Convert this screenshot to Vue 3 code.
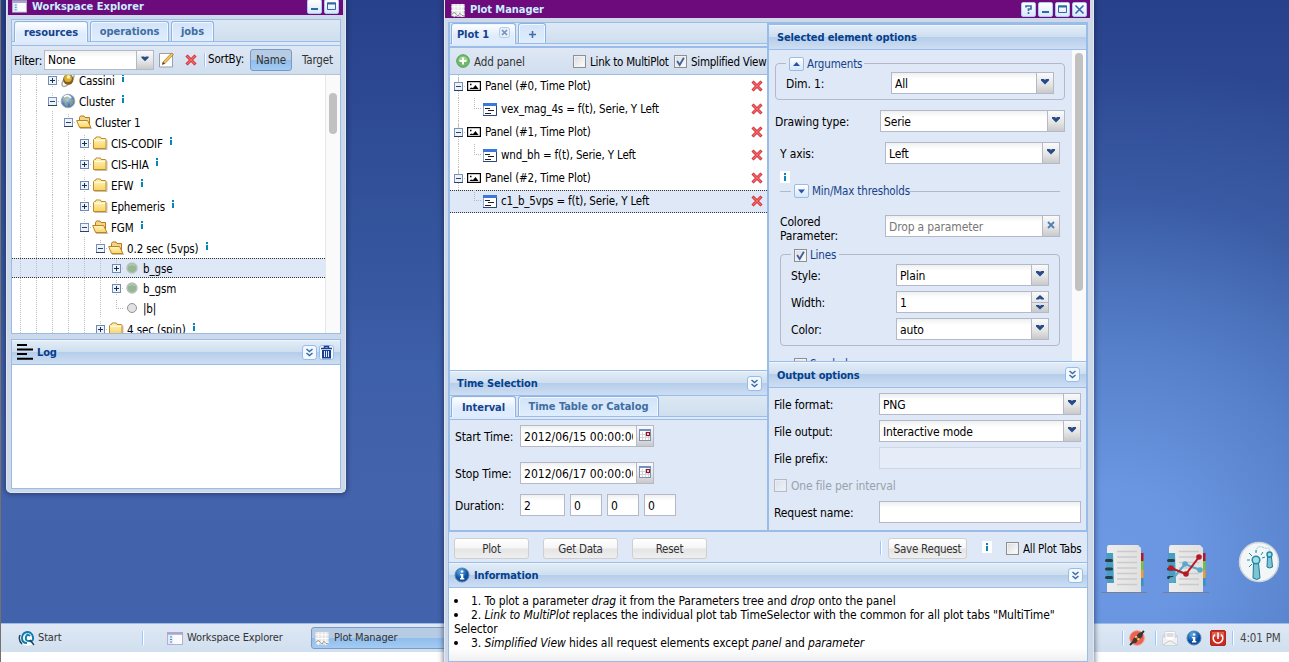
<script setup>
const tree = [
  { d: 2, t: 'Cassini', icon: 'cassini', e: 'plus', info: true },
  { d: 2, t: 'Cluster', icon: 'globe', e: 'minus', info: true },
  { d: 3, t: 'Cluster 1', icon: 'open', e: 'minus' },
  { d: 4, t: 'CIS-CODIF', icon: 'folder', e: 'plus', info: true },
  { d: 4, t: 'CIS-HIA', icon: 'folder', e: 'plus', info: true },
  { d: 4, t: 'EFW', icon: 'folder', e: 'plus', info: true },
  { d: 4, t: 'Ephemeris', icon: 'folder', e: 'plus', info: true },
  { d: 4, t: 'FGM', icon: 'open', e: 'minus', info: true },
  { d: 5, t: '0.2 sec (5vps)', icon: 'open', e: 'minus', info: true },
  { d: 6, t: 'b_gse', icon: 'ball', e: 'plus', leaf: true, sel: true },
  { d: 6, t: 'b_gsm', icon: 'ball', e: 'plus', leaf: true },
  { d: 6, t: '|b|', icon: 'dot', e: 'end', leaf: true },
  { d: 5, t: '4 sec (spin)', icon: 'folder', e: 'plus', info: true },
]
const plots = [
  { t: 'Panel (#0, Time Plot)' },
  { t: 'vex_mag_4s = f(t), Serie, Y Left', child: true },
  { t: 'Panel (#1, Time Plot)' },
  { t: 'wnd_bh = f(t), Serie, Y Left', child: true },
  { t: 'Panel (#2, Time Plot)' },
  { t: 'c1_b_5vps = f(t), Serie, Y Left', child: true, sel: true, last: true },
]
</script>

<template>
  <div class="desktop">
    <svg class="defs" width="0" height="0">
      <defs>
        <linearGradient id="gf" x1="0" y1="0" x2="0" y2="1"><stop offset="0" stop-color="#fff6c4" /><stop offset="1" stop-color="#f9d35f" /></linearGradient>
        <radialGradient id="gg" cx=".4" cy=".3"><stop offset="0" stop-color="#d5e4f2" /><stop offset="1" stop-color="#5279ad" /></radialGradient>
        <radialGradient id="gi" cx=".4" cy=".25"><stop offset="0" stop-color="#64b2ee" /><stop offset="1" stop-color="#0c4f9c" /></radialGradient>
        <linearGradient id="gp" x1="0" y1="0" x2="1" y2="0"><stop offset="0" stop-color="#ededed" /><stop offset="1" stop-color="#e0e0e0" /></linearGradient>
      </defs>
      <symbol id="folder" viewBox="0 0 16 16">
        <path d="M1.500 13.500v-9l1-1h1l.5-1.500h4.500l.5 1.500h4.500l.5.500v9.500z" fill="url(#gf)" stroke="#c08a2e" />
        <path d="M2.500 14.500h12.500V5" fill="none" stroke="#8b8266" stroke-opacity=".5" /><path d="M2.500 5.500h10.500" stroke="#fffbe0" />
      </symbol>
      <symbol id="open" viewBox="0 0 16 16">
        <path d="M3.500 12.500v-9l1-1.500h3.500l1 1.500h4.500v9z" fill="#f4d585" stroke="#b57a1c" />
        <path d="M.7 6.500h10.800l3.500 7H3.500z" fill="url(#gf)" stroke="#bd8426" /><path d="M4 14.500h12" stroke="#8b8266" stroke-opacity=".5" />
      </symbol>
      <symbol id="cassini" viewBox="0 0 16 16">
        <ellipse cx="8" cy="8" rx="8" ry="3.500" transform="rotate(-48 8 8)" fill="none" stroke="#aaa9a4" stroke-width="1.500" />
        <circle cx="8.300" cy="7.500" r="5.200" fill="#80601a" /><circle cx="8" cy="6.300" r="3.800" fill="#dcae39" /><circle cx="8.500" cy="5" r="1.800" fill="#fff0a0" />
      </symbol>
      <symbol id="globe" viewBox="0 0 16 16">
        <circle cx="8" cy="8" r="6.800" fill="url(#gg)" stroke="#98a2b0" stroke-width=".8" />
        <path d="M3 4l4-2 2 2-2 3-3 1zM10 7l4-1-1 5-3 2zM6 9l2 3-1 2-3-3z" fill="#94b884" opacity=".6" /><path d="M4 4q4-3 7 1" stroke="#fff" stroke-width="1.500" fill="none" />
      </symbol>
      <symbol id="ball" viewBox="0 0 16 16"><circle cx="8" cy="8" r="5" fill="#92b994" stroke="#bcbdbc" stroke-width="1.500" /><path d="M5 5.500q3-2 6 0" stroke="#bbd2bb" fill="none" /></symbol>
      <symbol id="dot" viewBox="0 0 16 16"><circle cx="8" cy="8" r="4.500" fill="#e2e2e2" stroke="#929292" /></symbol>
      <symbol id="plus" viewBox="0 0 16 16"><path d="M8.500 0v16M8 8.500h8" stroke="#c3c3c3" stroke-dasharray="1 1" /><rect x="4.500" y="4.500" width="8" height="8" fill="#eef3fb" stroke="#6f8bb3" /><path d="M6 8.500h5M8.500 6v5" stroke="#1d2f50" /></symbol>
      <symbol id="minus" viewBox="0 0 16 16"><path d="M8.500 0v5M8 8.500h8" stroke="#c3c3c3" stroke-dasharray="1 1" /><rect x="4.500" y="4.500" width="8" height="8" fill="#eef3fb" stroke="#7891b6" /><path d="M6 8.500h5M4 12.500h9" stroke="#2c4264" /></symbol>
      <symbol id="end" viewBox="0 0 16 16"><path d="M8.500 0v9M8 8.500h8" stroke="#b8b8b8" stroke-dasharray="1 1" /></symbol>
      <symbol id="del" viewBox="0 0 12 12"><path d="M1.500 1.500l9 9M10.500 1.500l-9 9" stroke="#cf2531" stroke-width="3" /><path d="M2 2l8 8M10 2l-8 8" stroke="#f46b6a" stroke-width="1.400" /></symbol>
      <symbol id="img" viewBox="0 0 14 10"><rect x=".6" y=".6" width="12.800" height="8.800" fill="#fff" stroke="#000" stroke-width="1.200" /><path d="M2.500 8l1.500-1.500 2 .5 2.500-3 3 4z" fill="#000" /><path d="M3 2.800h1.500v1.500H3z" /></symbol>
      <symbol id="par" viewBox="0 0 14 13"><rect x=".5" y=".5" width="13" height="12" fill="#fff" stroke="#8ca5d5" /><path d="M0 1.500h14" stroke="#3b78dc" stroke-width="3" /><path d="M13.500 3v9.500H0" fill="none" stroke="#2c4579" /><path d="M2 5.500h5M5 7.500h6M2 10.500h6" stroke="#202020" /></symbol>
      <symbol id="chart" viewBox="0 0 16 16"><path d="M1 1h14v14L1 14z" fill="#e4e4e4" /><path d="M4 1v14M8 1v14M12 1v14M1 4h14M1 8h14M1 12h14" stroke="#fff" /><path d="M1 13q3-5 5-1l2 2 2-3 2 2 3 1" fill="none" stroke="#8d8d8d" /></symbol>
      <symbol id="listwin" viewBox="0 0 16 13"><rect x=".5" y=".5" width="15" height="12" fill="#fbfbff" stroke="#b3b0cf" /><path d="M0 1.500h16" stroke="#aaa5cd" stroke-width="2.500" /><path d="M1 3h5v9H1z" fill="#e2eaf6" /><path d="M3 5h2M3 7.500h2M3 10h2" stroke="#3b93d4" /></symbol>
      <symbol id="chev" viewBox="0 0 15 15"><rect x=".5" y=".5" width="14" height="14" rx="2.500" fill="#f2f8fe" stroke="#96bce9" /><path d="M4.500 4l3 2.500 3-2.500M4.500 8l3 2.500 3-2.500" fill="none" stroke="#3c6ca8" stroke-width="1.500" /></symbol>
      <symbol id="inf" viewBox="0 0 16 16"><circle cx="8" cy="8" r="7" fill="url(#gi)" stroke="#5683b5" /><path d="M7 3.500h2.300v2H7zM6 7h3.300v4h1v1.500H6V11h1V8.200H6z" fill="#fff" /></symbol>
      <symbol id="cal" viewBox="0 0 14 14"><rect x=".5" y=".5" width="11" height="11" fill="#fff" stroke="#7b93b8" /><path d="M0 1h12" stroke="#6f91c4" stroke-width="2" /><path d="M3.500 3v8M6.500 3v8M9.500 3v8M1 5.500h10M1 8.500h10" stroke="#d5d5d5" /><rect x="7.500" y="3.500" width="3" height="3" fill="#fff" stroke="#8d1426" stroke-width="1.200" /></symbol>
      <symbol id="arr" viewBox="0 0 16 20"><path d="M4 6h3l1 1 1-1h3v1.500L8 11.500 4 7.500z" fill="#254b88" /></symbol>
      <symbol id="tick" viewBox="0 0 13 13"><path d="M2.500 6l3 4.500L10.500 2" fill="none" stroke="#41619d" stroke-width="2.200" /></symbol>
      <symbol id="t-min" viewBox="0 0 13 13"><path d="M3 9h7" stroke="#3465a8" stroke-width="2" /></symbol>
      <symbol id="t-max" viewBox="0 0 13 13"><path d="M2.500 3h8v6.500h-8z" fill="none" stroke="#3465a8" /><path d="M2 3.500h9" stroke="#3465a8" stroke-width="2" /></symbol>
      <symbol id="book" viewBox="0 0 46 50">
        <path d="M0 47.500h46" stroke="#777" stroke-width="1" opacity=".7" />
        <path d="M38 8h4.500v8H38z" fill="#b01a24" /><path d="M38 16h4.500v9H38z" fill="#78bf3c" /><path d="M38 25h4.500v8H38z" fill="#eb9c33" /><path d="M38 33h4.500v8H38z" fill="#3a91b9" />
        <path d="M8 0h29l3 3v44H6V3q0-3 2-3z" fill="url(#gp)" /><path d="M16 6.500h20M16 12h20M16 17.500h20M16 23h20M16 28.500h20M16 34h20M16 39.500h20" stroke="#cacaca" stroke-width="1.300" />
        <path d="M5 8h7l1 30H6z" fill="#4a9ec4" /><path d="M5.500 15.500h5M5.500 24h5M5.500 32.500h5" stroke="#263d47" stroke-width="3" stroke-linecap="round" />
      </symbol>
    </svg>

    <div class="icons">
      <svg width="46" height="50"><use href="#book" /></svg>
      <svg width="46" height="50"><use href="#book" /><path d="M8 36L22 19l15 6" fill="none" stroke="#5aa9cb" stroke-width="2" /><path d="M8 23l15 6 13-17" fill="none" stroke="#b51927" stroke-width="2" /><g fill="#5aa9cb"><circle cx="9" cy="35" r="3" /><circle cx="22" cy="19" r="2.800" /><circle cx="37" cy="25" r="2.800" /></g><g fill="#b51927"><circle cx="8" cy="23" r="2.800" /><circle cx="23" cy="29" r="2.800" /><circle cx="36" cy="12" r="2.800" /></g></svg>
      <svg class="round" width="42" height="42" viewBox="0 0 42 42"><circle cx="21" cy="21" r="19.500" fill="#f3f6f7" stroke="#cdd5dc" stroke-width="1.500" /><path d="M18 11q1-7 6-5t6 1 2 4" fill="none" stroke="#8cc8dc" stroke-dasharray="2 1" /><path d="M15.500 22h5l1.500 15q-3 3-7 0z" fill="#7fc4d4" stroke="#197a96" /><circle cx="18" cy="19" r="3.800" fill="#a6dbe6" stroke="#218ba8" stroke-width="1.500" /><path d="M29.500 16h4l1 10q-3 2-5.500 0z" fill="#7fc4d4" stroke="#197a96" /><circle cx="31.500" cy="13.500" r="2.500" fill="#a6dbe6" stroke="#218ba8" stroke-width="1.500" /><path d="M9 19h3M24 17l3-1M11 12l3 3M18 9v3M25 11l-2 3M11 26l3-3" stroke="#218ba8" /></svg>
    </div>

    <footer class="taskbar">
      <svg class="start-ic" width="18" height="16" viewBox="0 0 18 16"><path d="M10 1q6 0 6 6t-2 6l3 2-4 0q-7 2-10-3T5 2q3-2 5-1z" fill="#fff" /><path d="M9 13q-5 0-5-5t5-6q5 0 6 5t-4 4q-4 0-3-4t4-1" fill="none" stroke="#0c7fae" stroke-width="2" /><path d="M12 10l4 5M2 5q-2 5 2 9" stroke="#26415e" fill="none" stroke-width="1.500" /></svg>
      <span class="tb-start">Start</span><i class="sep s1"></i>
      <svg class="we" width="16" height="13"><use href="#listwin" /></svg><span class="tb-we">Workspace Explorer</span>
      <div class="task"><svg width="16" height="15"><use href="#chart" /></svg><span>Plot Manager</span></div>
      <div class="tray">
        <i class="sep"></i>
        <svg width="16" height="16" viewBox="0 0 16 16"><circle cx="8" cy="8" r="7.300" fill="#ee6050" stroke="#f59a88" /><path d="M3 13l1-4 2-2 3 3-2 3zM7 6l3-3 3-1 1 2-1 3-2 2z" fill="#3a3a3a" /><path d="M1 15l3-3M12 4l3-3" stroke="#333" stroke-width="1.800" /><path d="M6 7.500l2-1.500M8.500 10l2-1.500" stroke="#ffd75a" stroke-width="1.500" /></svg>
        <i class="sep b"></i>
        <svg class="mail" width="16" height="16" viewBox="0 0 16 16"><path d="M1 6l7-5 7 5v9H1z" fill="#d9dcdf" stroke="#c4c8cb" /><path d="M3 1.500h10v7.500l-5 3-5-3z" fill="#fff" stroke="#d6d6d6" /><path d="M4.500 4h7M4.500 6h7" stroke="#bbb" /><path d="M1 7l7 4 7-4v8H1z" fill="#f0f1f1" /><path d="M1 15l6-4h2l6 4" fill="none" stroke="#c8c8c8" /></svg>
        <svg class="ti" width="16" height="16"><use href="#inf" /></svg>
        <svg class="pw" width="16" height="16" viewBox="0 0 16 16"><rect x=".5" y=".5" width="15" height="15" rx="1.500" fill="#cf2a20" stroke="#a82a22" /><path d="M2 2h12v5H2z" fill="#e0604f" /><path d="M5 4.500a4.800 4.800 0 1 0 6 0" fill="none" stroke="#fff" stroke-width="1.600" /><path d="M8 2.500V9" stroke="#fff" stroke-width="1.600" /></svg>
        <i class="sep c"></i><span class="clock">4:01 PM</span>
      </div>
    </footer>

    <section class="win explorer">
      <header class="title"><svg width="15" height="13"><use href="#listwin" /></svg><b>Workspace Explorer</b><span class="tools"><i class="tool"><svg><use href="#t-min" /></svg></i><i class="tool"><svg><use href="#t-max" /></svg></i></span></header>
      <div class="ex-panel">
        <nav class="tabs"><span class="tab on t-res">resources</span><span class="tab t-op">operations</span><span class="tab t-job">jobs</span></nav>
        <div class="toolbar">
          <label>Filter:</label>
          <div class="combo"><span>None</span><i class="trig"><svg><use href="#arr" /></svg></i></div>
          <svg class="edit" width="15" height="16" viewBox="0 0 15 16"><path d="M.5 1.500h13v13.500H.5z" fill="#fff" stroke="#9a9ea5" /><path d="M3.500 12l.5-2L12.500 1l2 1.500-8.500 9z" fill="#eec35c" stroke="#a77a27" stroke-width=".7" /><path d="M3 13l1-3 2 1.500z" fill="#444" /></svg>
          <svg class="rm" width="12" height="12"><use href="#del" /></svg>
          <i class="sep"></i><span class="sortby">SortBy:</span><span class="pressed">Name</span><span class="target">Target</span>
        </div>
        <div class="tree">
          <div class="rows">
            <div v-for="r in tree" :key="r.t" class="row" :class="{ leaf: r.leaf, sel: r.sel }">
              <i v-for="n in r.d" :key="n" class="line"></i>
              <svg width="16" height="16"><use :href="'#' + r.e" /></svg>
              <svg width="16" height="16"><use :href="'#' + r.icon" /></svg>
              <span>{{ r.t }}</span><i v-if="r.info" class="info"></i>
            </div>
          </div>
          <div class="track"><i></i></div>
        </div>
      </div>
      <div class="log">
        <header class="phead"><svg width="16" height="16" viewBox="0 0 16 16"><path d="M0 1h10M0 5.500h16M0 10h10M0 14.800h16" stroke="#000" stroke-width="2" /></svg><b>Log</b><svg class="r" width="15" height="15"><use href="#chev" /></svg><svg class="trash" width="15" height="15" viewBox="0 0 15 15"><rect x=".5" y=".5" width="14" height="14" rx="2" fill="#f2f8fe" stroke="#96bce9" /><path d="M2 3.500h11M5.500 3V1.500h4V3" fill="none" stroke="#1c3f90" stroke-width="1.500" /><path d="M3 5h9v8.500H3z" fill="#1c3f90" /><path d="M5.500 6v6M7.500 6v6M9.500 6v6" stroke="#dceaff" /></svg></header>
      </div>
    </section>

    <section class="win plot">
      <header class="title"><svg width="16" height="15"><use href="#chart" /></svg><b>Plot Manager</b><span class="tools"><i class="tool"><svg viewBox="0 0 13 13"><path d="M4 4.500V3h5v3H6.500v2M6.500 9v2" fill="none" stroke="#3c6ca8" stroke-width="1.700" /></svg></i><i class="tool"><svg><use href="#t-min" /></svg></i><i class="tool"><svg><use href="#t-max" /></svg></i><i class="tool"><svg viewBox="0 0 13 13"><path d="M2.500 2.500l8 8M10.500 2.500l-8 8" fill="none" stroke="#3465a8" stroke-width="1.600" /></svg></i></span></header>
      <div class="pm">
        <div class="cols">
          <div class="left">
            <nav class="tabs"><span class="tab on t-p1">Plot 1<svg width="11" height="11" viewBox="0 0 11 11"><rect x=".5" y=".5" width="10" height="10" rx="2" fill="#e4effa" stroke="#b3cdeb" /><path d="M3 3l5 5M8 3l-5 5" stroke="#7190b8" stroke-width="1.600" /></svg></span><span class="tab t-plus"><svg width="9" height="9" viewBox="0 0 9 9"><path d="M4.500 1v7M1 4.500h7" stroke="#416da3" stroke-width="1.600" /></svg></span></nav>
            <div class="toolbar">
              <svg width="14" height="14" viewBox="0 0 14 14"><circle cx="7" cy="7" r="6.300" fill="#6dbb66" stroke="#5b9d5b" /><path d="M2.500 7a4.500 4.500 0 0 1 9 0" fill="#a3d795" /><path d="M7 3.500v7M3.500 7h7" stroke="#fff" stroke-width="2" /></svg>
              <span class="add">Add panel</span><i class="cb"></i><span class="l1">Link to MultiPlot</span><i class="cb"><svg><use href="#tick" /></svg></i><span class="l2">Simplified View</span>
            </div>
            <div class="plist">
              <div v-for="r in plots" :key="r.t" class="prow" :class="{ sel: r.sel }">
                <template v-if="r.child"><i class="line" :class="{ none: r.last }"></i><svg class="el" width="16" height="23" viewBox="0 0 16 23"><path d="M8.500 0v11M8 10.500h8" stroke="#b8b8b8" stroke-dasharray="1 1" /></svg><svg class="pi" width="14" height="13"><use href="#par" /></svg></template>
                <template v-else><i class="line under"></i><svg class="mn" width="16" height="16"><use href="#minus" /></svg><svg class="im" width="14" height="10"><use href="#img" /></svg></template>
                <span>{{ r.t }}</span><svg class="x" width="12" height="12"><use href="#del" /></svg>
              </div>
            </div>
            <header class="phead ts"><b>Time Selection</b><svg class="r" width="15" height="15"><use href="#chev" /></svg></header>
            <nav class="tabs t2"><span class="tab on t-int">Interval</span><span class="tab t-tt">Time Table or Catalog</span></nav>
            <div class="time">
              <div class="frow"><label class="w1">Start Time:</label><div class="date"><span>2012/06/15 00:00:00</span><i class="trig"><svg viewBox="0 0 16 20"><use href="#cal" x="2" y="3" width="14" height="14" /></svg></i></div></div>
              <div class="frow s"><label class="w1">Stop Time:</label><div class="date"><span>2012/06/17 00:00:00</span><i class="trig"><svg viewBox="0 0 16 20"><use href="#cal" x="2" y="3" width="14" height="14" /></svg></i></div></div>
              <div class="frow d"><label class="w1">Duration:</label><div class="inp a">2</div><div class="inp">0</div><div class="inp">0</div><div class="inp">0</div></div>
            </div>
          </div>
          <div class="right">
            <header class="phead sel-h"><b>Selected element options</b></header>
            <div class="opts">
              <div class="form">
                <div class="fs args"><div class="leg"><i class="tg"><svg viewBox="0 0 13 12"><path d="M3 8l3.500-4L10 8z" fill="#2a55a5" /></svg></i>Arguments</div>
                  <div class="frow"><label>Dim. 1:</label><div class="combo"><span>All</span><i class="trig"><svg><use href="#arr" /></svg></i></div></div></div>
                <div class="frow dt"><label>Drawing type:</label><div class="combo"><span>Serie</span><i class="trig"><svg><use href="#arr" /></svg></i></div></div>
                <div class="frow ya"><label>Y axis:</label><div class="combo"><span>Left</span><i class="trig"><svg><use href="#arr" /></svg></i></div></div>
                <div class="ibox"><i class="info"></i></div>
                <div class="mm"><div class="leg"><i class="tg"><svg viewBox="0 0 13 12"><path d="M3 4.500l3.500 4 3.500-4z" fill="#2a55a5" /></svg></i>Min/Max thresholds</div></div>
                <div class="frow cp"><label>Colored<br>Parameter:</label><div class="combo ph"><span>Drop a parameter</span><i class="trig"><svg viewBox="0 0 16 20"><path d="M5 6l6 6M11 6l-6 6" stroke="#4b80b8" stroke-width="1.800" /></svg></i></div></div>
                <div class="fs lines"><div class="leg"><i class="cb"><svg><use href="#tick" /></svg></i>Lines</div>
                  <div class="frow"><label>Style:</label><div class="combo"><span>Plain</span><i class="trig"><svg><use href="#arr" /></svg></i></div></div>
                  <div class="frow"><label>Width:</label><div class="combo"><span>1</span><i class="trig spin"><svg viewBox="0 0 16 20"><path d="M0 10.500h16" stroke="#b5b8c8" /><path d="M4 7.500v-1L8 3l4 3.500v1H9l-1-1-1 1zM4 13h3l1 1 1-1h3v1l-4 3.500L4 14z" fill="#254b88" /></svg></i></div></div>
                  <div class="frow"><label>Color:</label><div class="combo"><span>auto</span><i class="trig"><svg><use href="#arr" /></svg></i></div></div></div>
                <div class="fs sym"><div class="leg"><i class="cb"></i>Symbols</div></div>
              </div>
              <div class="track"><i></i></div>
            </div>
            <header class="phead out-h"><b>Output options</b><svg class="r" width="15" height="15"><use href="#chev" /></svg></header>
            <div class="out">
              <div class="frow"><label>File format:</label><div class="combo"><span>PNG</span><i class="trig"><svg><use href="#arr" /></svg></i></div></div>
              <div class="frow"><label>File output:</label><div class="combo"><span>Interactive mode</span><i class="trig"><svg><use href="#arr" /></svg></i></div></div>
              <div class="frow"><label>File prefix:</label><div class="inp off"></div></div>
              <div class="frow dis"><i class="cb"></i><span>One file per interval</span></div>
              <div class="frow"><label>Request name:</label><div class="inp"></div></div>
            </div>
          </div>
        </div>
        <div class="btns"><span class="btn">Plot</span><span class="btn">Get Data</span><span class="btn">Reset</span><i class="sep"></i><span class="btn save">Save Request</span><div class="ibox"><i class="info"></i></div><i class="cb"></i><span class="apt">All Plot Tabs</span></div>
        <header class="phead inf-h"><svg width="16" height="16"><use href="#inf" /></svg><b>Information</b><svg class="r" width="15" height="15"><use href="#chev" /></svg></header>
        <div class="infobody">
          <p><i class="bul"></i>1. To plot a parameter <em>drag</em> it from the Parameters tree and <em>drop</em> onto the panel</p>
          <p><i class="bul"></i>2. <em>Link to MultiPlot</em> replaces the individual plot tab TimeSelector with the common for all plot tabs "MultiTime"<br>Selector</p>
          <p><i class="bul"></i>3. <em>Simplified View</em> hides all request elements except <em>panel</em> and <em>parameter</em></p>
        </div>
      </div>
    </section>
  </div>
</template>

<style>
html, body { margin: 0; overflow: hidden; }
</style>

<style scoped>
* { box-sizing: border-box; }
.desktop { position: relative; width: 1289px; height: 662px; overflow: hidden; border-left: 1px solid #77716d; font: 12px/14px "DejaVu Sans Condensed", "DejaVu Sans", sans-serif; font-stretch: condensed; letter-spacing: -0.15px; color: #000; white-space: nowrap;
  background: radial-gradient(ellipse 520px 500px at 1110px 560px, #6c98e4 0, #6a95e0 15%, rgba(90, 134, 208, .85) 42%, rgba(70, 105, 180, .4) 72%, rgba(50, 80, 150, 0) 100%), linear-gradient(#28418c 0, #2d4893 90px, #34559d 240px, #3e5fa9 370px, #4363ac 480px, #4262ac 620px); }
.defs { position: absolute; }
svg { display: block; flex: none; }
i { font-style: normal; flex: none; }
.win { position: absolute; top: 0; background: #cdd9e8; border: 1px solid #dfe8f1; border-top: 0; box-shadow: 0 0 5px 1px rgba(20, 30, 60, .55); display: flex; flex-direction: column; }
.explorer { left: 5px; width: 340px; height: 493px; border-radius: 0 0 5px 5px; padding: 0 4px; }
.plot { left: 443px; width: 650px; height: 670px; padding: 0 5px 0 3px; }
.title { background: #6d0b7c; color: #c8f0ff; display: flex; align-items: center; font-size: 11px; flex: none; }
.title b { letter-spacing: .03px; margin-left: 5px; }
.plot .title b { letter-spacing: -.05px; margin-left: 4px; }
.explorer .title { height: 15px; margin: 0 -2px 4px -3px; padding: 0 4px; }
.plot .title { height: 18px; margin: 0 -2px 4px -3px; padding: 2px 4px 0 5px; }
.tools { margin-left: auto; display: flex; gap: 2px; }
.tool { width: 15px; height: 15px; border: 1px solid #a9c7ef; border-radius: 2px; background: linear-gradient(#fff, #d8e8fa); }
.plot .tools { margin-top: -1px; margin-right: -1px; }
.explorer .tool { margin-top: -2px; }
.explorer .title > svg, .explorer .title b { margin-top: -2px; }
.tool svg { width: 13px; height: 13px; }
.ex-panel { height: 315px; border: 1px solid #99bce8; background: #dfe8f6; flex: none; display: flex; flex-direction: column; }
.tabs { display: flex; align-items: flex-end; gap: 2px; height: 22px; padding-left: 2px; background: linear-gradient(#dde8f4, #cfdeee); border-bottom: 1px solid #99bce8; flex: none; }
.tab { height: 20px; border: 1px solid #8db2e3; border-bottom: 0; border-radius: 3px 3px 0 0; background: linear-gradient(#d3e3f8, #dfeefd); box-shadow: inset 1px 1px 0 #f1f7fe, inset -1px 0 0 #f1f7fe; color: #416da3; font-weight: bold; font-size: 11px; letter-spacing: -.05px; display: flex; justify-content: center; align-items: center; padding-top: 1px; }
.tab.on { color: #15428b; background: linear-gradient(#fff, #deecfd 60%); height: 21px; margin-bottom: -1px; }
.t-res { width: 74px; } .t-op { width: 79px; } .t-job { width: 43px; }
.toolbar { display: flex; align-items: center; background: linear-gradient(#dfe8f5, #d0deee); flex: none; font-size: 11.500px; }
.explorer .toolbar { margin-top: 3px; height: 30px; border-top: 1px solid #99bce8; border-bottom: 1px solid #b5c4d4; padding-left: 2px; }
.explorer .toolbar label { width: 30px; margin-top: 1px; flex: none; font-size: 12px; letter-spacing: -.3px; }
.combo, .date, .inp { display: flex; height: 22px; border: 1px solid #b5b8c8; background: linear-gradient(#eef0f0, #fff 6px); flex: none; }
.combo span, .date span { flex: 1; padding-left: 3px; line-height: 22px; overflow: hidden; }
.trig { width: 17px; border-left: 1px solid #b5b8c8; background: linear-gradient(#fafafa, #e6e6e6 55%, #c9c9c9); border-radius: 0 2px 0 0; }
.trig svg { width: 16px; height: 20px; }
.explorer .combo { width: 110px; height: 20px; font-size: 12px; }
.explorer .combo span { line-height: 19px; }
.explorer .combo .trig svg { height: 18px; }
.edit { margin-left: 5px; } .rm { margin-left: 11px; }
.sep { width: 2px; height: 14px; background: #98c8ff; border-right: 1px solid #fff; }
.explorer .toolbar .sep { margin: 0 2px 0 7px; }
.sortby { width: 42px; margin-top: -2px; }
.pressed { width: 42px; height: 22px; border: 1px solid #7a9ac4; border-radius: 3px; background: linear-gradient(#b6cbe4 50%, #8fbdec 50%, #a3ccf4); text-align: center; line-height: 20px; color: #333; }
.target { margin-left: 10px; color: #333; }
.tree { flex: 1; display: flex; background: #fff; overflow: hidden; min-height: 0; font-size: 11.500px; letter-spacing: -.12px; }
.rows { flex: 1; margin-top: -6px; }
.row { height: 21px; display: flex; align-items: center; flex: none; }
.row.leaf { height: 20px; }
.row.sel, .prow.sel { background: #dfe8f6; border-top: 1px dotted #333; border-bottom: 1px dotted #333; }
.row > span { margin-left: 3px; padding-top: 2px; }
.line { width: 16px; align-self: stretch; background: repeating-linear-gradient(#c0c0c0 0 1px, transparent 1px 2px) 8px 0 / 1px 100% no-repeat; }
.line.none { background: none; }
.info { width: 3px; height: 8px; background: linear-gradient(#0a86b5 2px, #eef 2px 3px, #0a86b5 3px) center / 2px 100% no-repeat; display: block; }
.row .info { margin: -3px 0 0 7px; }
.explorer .track { width: 15px; background: #fafafa; border-left: 1px solid #e7e7e7; padding: 18px 0 0 3px; }
.track i { display: block; background: #c1c1c1; border-radius: 4px; }
.explorer .track i { width: 8px; height: 41px; }
.log { margin-top: 5px; height: 150px; border: 1px solid #99bce8; background: #fff; }
.phead { display: flex; align-items: center; background: linear-gradient(#e3edf7 0, #cfdff0 48%, #b5cdea 50%, #cddef2); border-bottom: 1px solid #99bce8; color: #04408c; font-size: 11px; flex: none; padding: 0 8px; box-shadow: inset 0 1px 0 #eef5fc; }
.phead b { letter-spacing: -.12px; padding-top: 2px; }
.phead .r { margin-left: auto; }
.log .phead { height: 25px; padding: 0 6px 0 5px; }
.log b { margin-left: 4px; } .trash { margin-left: 2px; }
.pm { border: 1px solid #99bce8; border-width: 1px 1px 0; flex: 1; background: #dfe8f6; display: flex; flex-direction: column; }
.cols { display: flex; height: 510px; border: 1px solid #99bce8; border-width: 1px 1px 2px; flex: none; margin-top: -1px; }
.left { width: 319px; border-right: 2px solid #99bce8; display: flex; flex-direction: column; flex: none; }
.plot .tabs { padding-left: 1px; height: 21px; }
.t-p1 { width: 65px; } .t-p1 svg { margin: -5px 0 0 10px; } .t-plus { width: 28px; }
.left > .toolbar { height: 29px; margin-top: 2px; border-top: 2px solid #99bce8; border-bottom: 1px solid #99bce8; padding-left: 6px; }
.left > .toolbar span { flex: none; padding-top: 1px; }
.add { width: 99px; margin-left: 4px; color: #333; }
.cb { width: 13px; height: 13px; border: 1px solid #8c8f94; background: linear-gradient(135deg, #d8dadd, #fff); box-shadow: inset 0 0 0 1px #f2f2f2; display: block; }
.cb svg { width: 11px; height: 11px; }
.l1 { width: 84px; margin-left: 4px; letter-spacing: -.25px; } .l2 { margin-left: 4px; letter-spacing: -.25px; }
.plist { height: 295px; background: #fff; flex: none; font-size: 11.500px; }
.prow { height: 23px; display: flex; align-items: center; }
.prow span { margin: -2px 0 0 4px; flex: 1; letter-spacing: -.17px; }
.prow .x { margin: -2px 4px 0 0; }
.line.under { margin-right: -16px; } .mn { margin-top: -2px; } .im { margin: -2px 0 0 1px; } .pi { margin-left: 1px; margin-top: -1px; }
.ts { height: 26px; border-top: 1px solid #99bce8; padding: 0 5px 0 7px; }
.t2.tabs { height: 21px; }
.t-int { width: 65px; } .t-tt { width: 141px; }
.time { margin-top: 2px; border-top: 1px solid #99bce8; flex: 1; padding: 5px 5px; }
.frow { display: flex; align-items: center; }
.frow label { padding-top: 2px; flex: none; }
.w1 { width: 65px; flex: none; }
.date { width: 134px; letter-spacing: .02px; } .date span { text-overflow: clip; margin-right: 3px; }
.s { margin-top: 15px; } .d { margin-top: 10px; }
.d .inp { width: 32px; margin-right: 5px; padding-left: 3px; line-height: 22px; } .d .inp.a { width: 45px; }
.right { flex: 1; display: flex; flex-direction: column; min-width: 0; }
.sel-h { height: 27px; border-top: 2px solid #99bce8; }
.opts { height: 311px; display: flex; flex: none; overflow: hidden; }
.form { flex: 1; padding: 13px 6px 0 6px; }
.fs { border: 1px solid #b5b8c8; border-radius: 4px; }
.leg { display: inline-flex; align-items: center; height: 14px; background: #dfe8f6; color: #15428b; padding: 0 4px 0 3px; gap: 3px; font-size: 11.500px; }
.tg { width: 15px; height: 14px; border: 1px solid #99bbe8; border-radius: 2px; background: linear-gradient(#fff, #d7e7fa); }
.tg svg { width: 13px; height: 12px; }
.args { height: 37px; width: 290px; padding: 0 10px; }
.args .leg { margin: -7px 0 0 0; display: flex; width: 78px; }
.args .frow { margin-top: 1px; }
.args label { width: 105px; } .args .combo { width: 163px; }
.dt { margin-top: 10px; } .dt label { width: 105px; } .dt .combo { width: 185px; }
.ya { margin: 10px 0 0 5px; } .ya label, .cp label { width: 105px; } .ya .combo, .cp .combo { width: 175px; }
.ibox { width: 10px; height: 12px; background: #fff; display: flex; justify-content: center; align-items: center; }
.form .ibox { margin: 7px 0 0 5px; }
.mm { margin: 1px 0 0 5px; width: 280px; height: 14px; background: linear-gradient(#b5b8c8, #b5b8c8) 0 7px / 100% 1px no-repeat; padding-left: 11px; }
.mm .leg { display: flex; width: 119px; }
.cp { margin: 17px 0 0 5px; height: 27px; align-items: flex-start; } .cp .combo { margin-top: 0; color: #777; } .cp label { white-space: normal; padding-top: 0; }
.lines { width: 280px; height: 92px; margin: 12px 0 0 5px; padding: 0 10px; }
.lines .leg, .sym .leg { margin-top: -7px; display: flex; width: 48px; }
.lines .frow { margin-top: 5px; } .lines .leg + .frow { margin-top: 2px; }
.lines label { width: 105px; } .lines .combo { width: 153px; }
.sym { width: 280px; height: 60px; margin: 17px 0 0 5px; padding: 0 10px; } .sym .leg { width: 66px; }
.opts .track { width: 14px; background: #fafafa; padding: 3px 0 0 3px; flex: none; }
.opts .track i { width: 8px; height: 238px; }
.out-h { height: 27px; border-top: 1px solid #99bce8; padding-right: 6px; }
.out { padding: 5px 5px; display: flex; flex-direction: column; gap: 5px; }
.out label { width: 105px; flex: none; } .out .combo, .out .inp { width: 202px; }
.out .off { background: #e6edf8; border-color: #cfd6e4; }
.dis { height: 22px; color: #9aa1ab; } .dis span { margin-left: 4px; padding-top: 1px; } .dis .cb { opacity: .5; }
.btns { height: 30px; display: flex; align-items: center; padding: 2px 5px 0; flex: none; font-size: 11.500px; letter-spacing: -.25px; }
.btn { width: 75px; height: 21px; border: 1px solid #cfcfcf; border-radius: 3px; background: linear-gradient(#fff, #f5f5f5 49%, #e4e4e4 51%, #efefef); text-align: center; line-height: 20px; margin-right: 14px; color: #333; flex: none; }
.btns .sep { margin: 0 6px 0 159px; } .save { width: 79px; margin: 0; }
.btns .ibox { margin: -2px 0 0 15px; } .btns > .cb { margin: 1px 0 0 14px; } .apt { margin: 2px 0 0 4px; }
.inf-h { height: 26px; border-top: 1px solid #99bce8; padding: 0 4px 0 5px; } .inf-h b { margin-left: 4px; }
.infobody { flex: none; height: 74px; background: linear-gradient(#fff 60px, #f0f0f0); border-bottom: 1px solid #99bce8; padding: 6px 5px; letter-spacing: -.1px; }
p { margin: 0; } .bul { display: inline-block; width: 4px; height: 4px; border-radius: 2px; background: #000; margin: 0 13px 2px 0; }
.taskbar { position: absolute; left: 0; right: 0; bottom: 0; height: 39px; border-top: 1px solid #99bce8; border-bottom: 10px solid #fff; background: linear-gradient(#dfe8f5, #d1dfee); display: flex; align-items: center; color: #333; padding-left: 17px; font-size: 11px; letter-spacing: -.15px; }
.tb-start { margin-left: 2px; width: 104px; } .s1 { margin-right: 23px; } .we + span { margin-left: 4px; width: 124px; }
.task { width: 150px; height: 22px; border: 1px solid #7a9ac4; border-radius: 3px; background: linear-gradient(#b6cbe4 50%, #8fbdec 50%, #a3ccf4); display: flex; align-items: center; padding-left: 2px; gap: 4px; }
.tray { margin-left: 661px; display: flex; align-items: center; } .tray .sep + svg { margin-left: 5px; } .sep.b { margin-left: 10px; } .mail { margin-left: 6px; } .ti { margin-left: 8px; } .pw { margin-left: 8px; } .sep.c { margin: 0 6px 0 6px; }
.clock { font-size: 11.500px; color: #444; }
.icons { position: absolute; left: 1100px; top: 545px; display: flex; gap: 16px; } .round { margin: -4px 0 0 13px; }
</style>
